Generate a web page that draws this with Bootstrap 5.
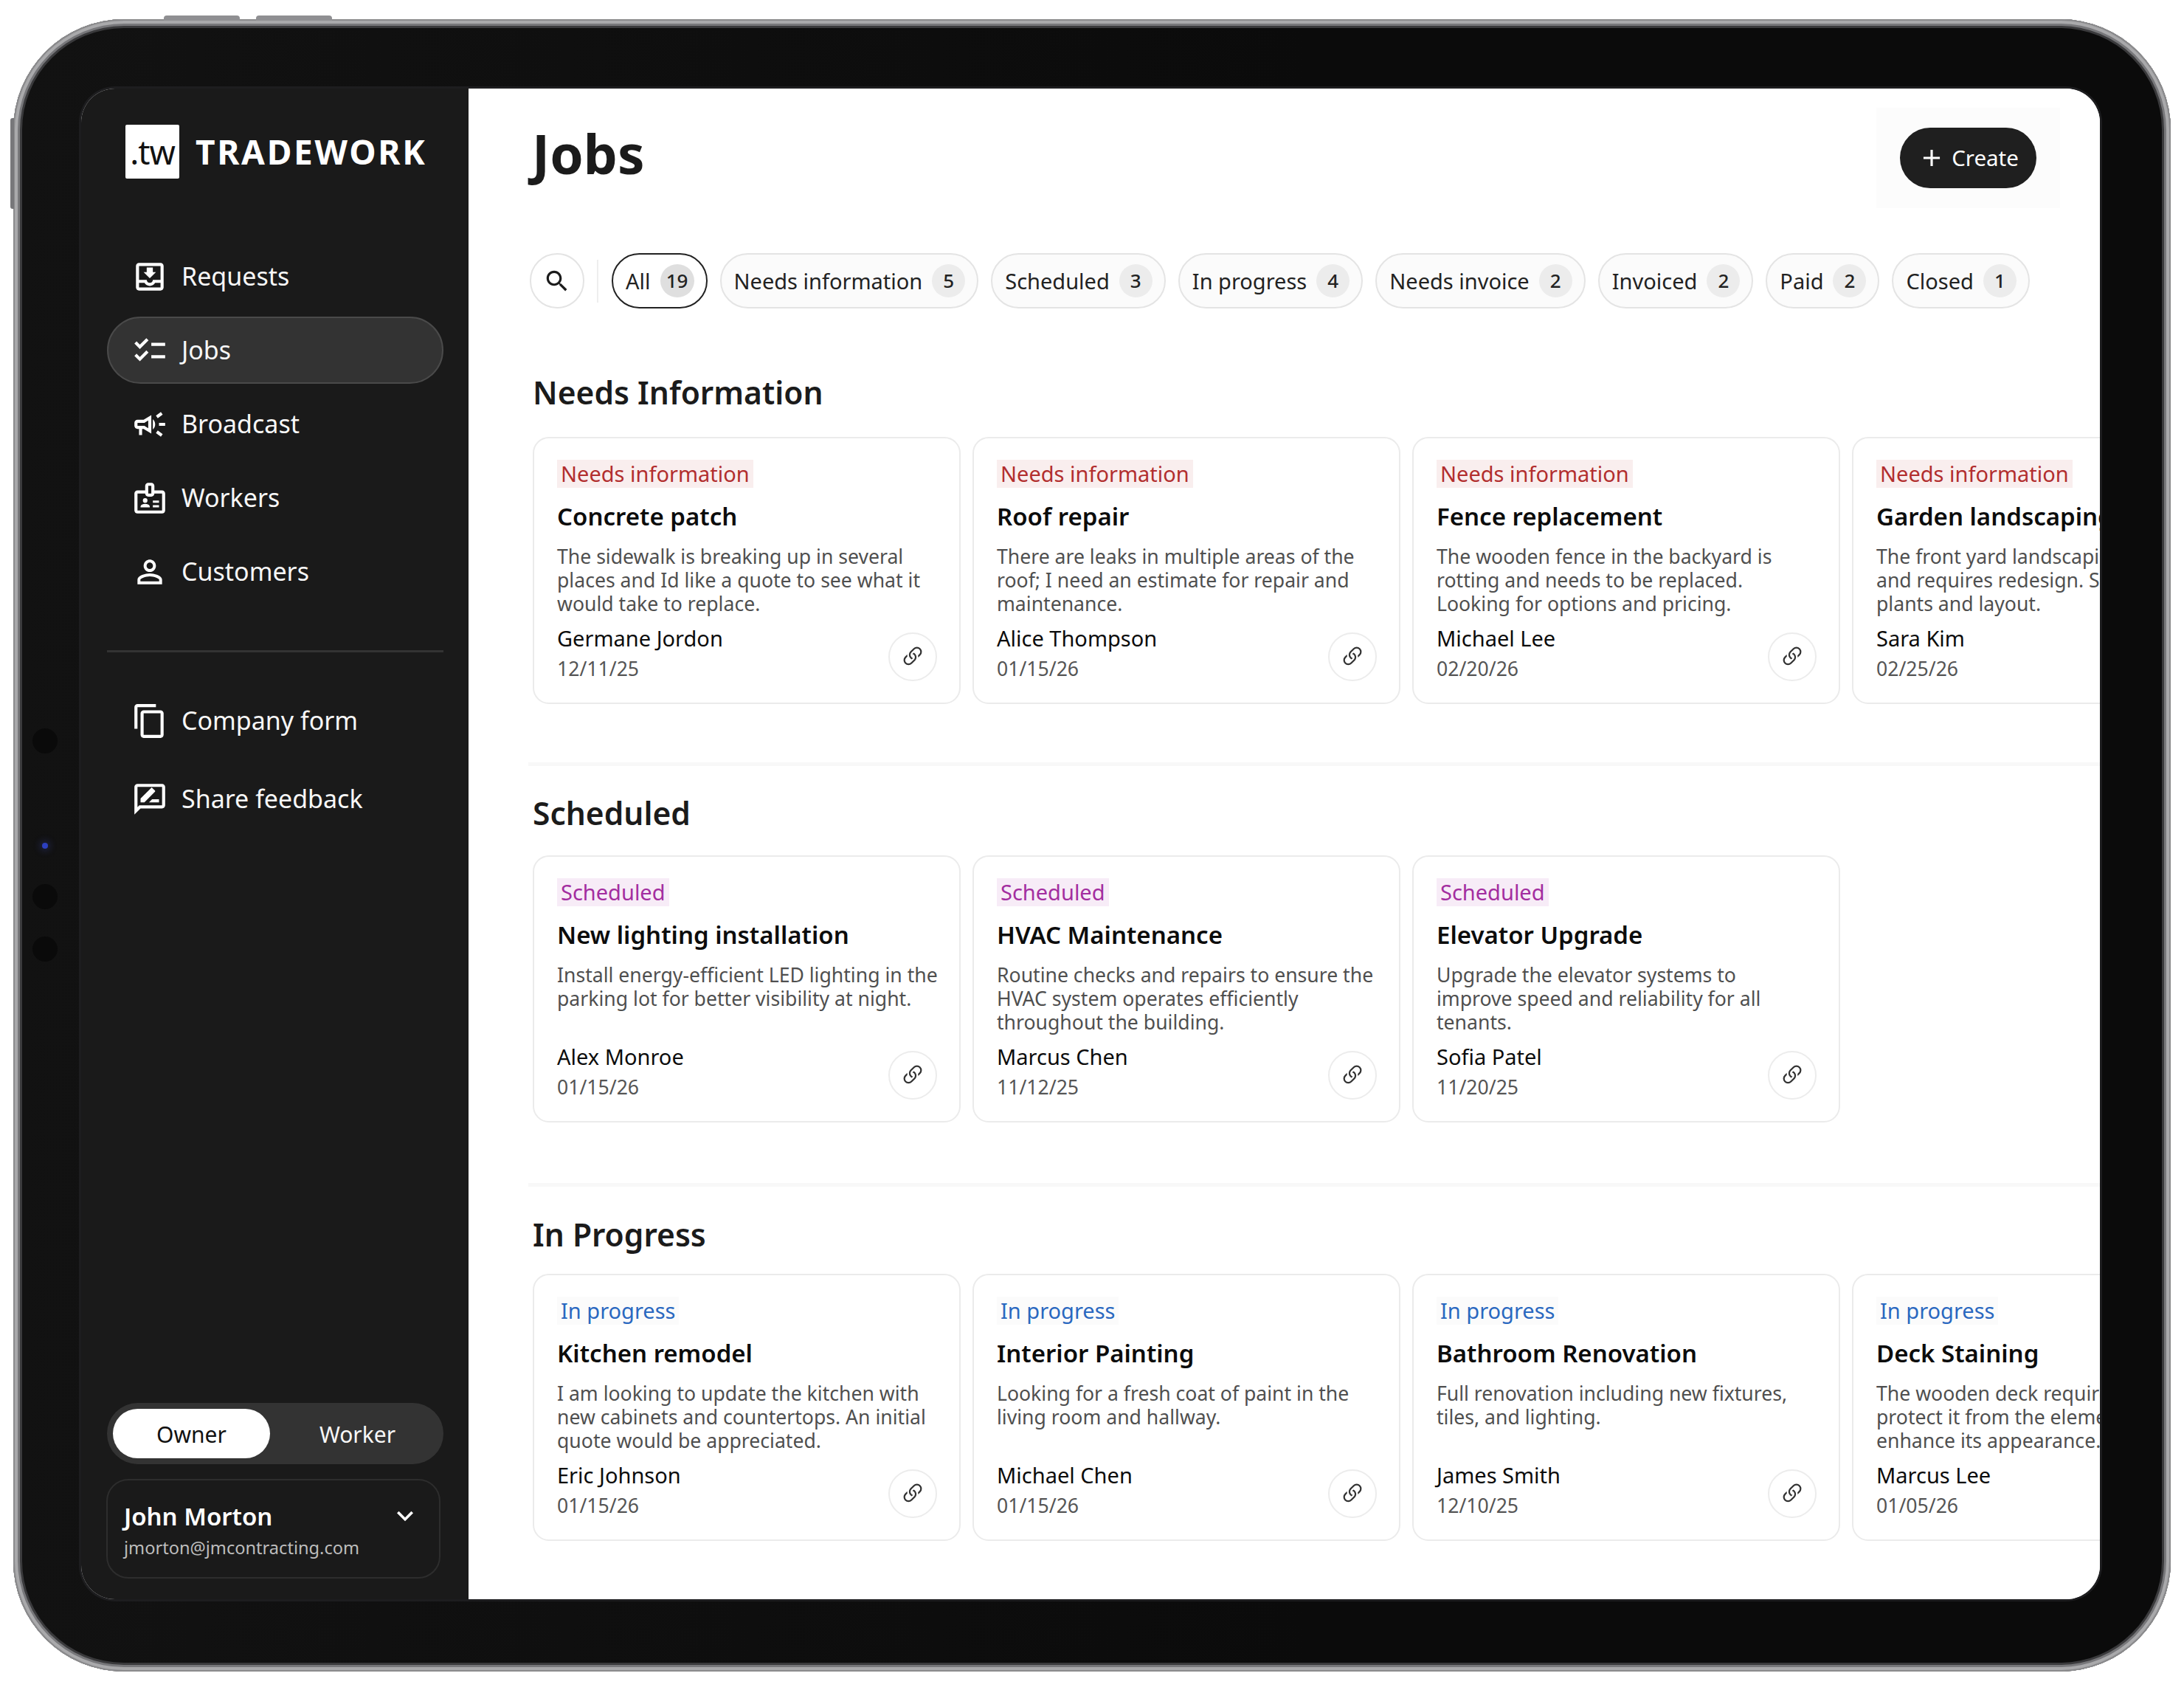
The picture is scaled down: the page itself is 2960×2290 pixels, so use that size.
<!DOCTYPE html>
<html lang="en">
<head>
<meta charset="utf-8">
<title>Tradework Jobs</title>
<link href="https://cdn.jsdelivr.net/npm/bootstrap@5.3.0/dist/css/bootstrap.min.css" rel="stylesheet">
<style>
html,body{margin:0;width:2960px;height:2290px;overflow:hidden;background:#fff;font-family:"Noto Sans",sans-serif;}
.tablet-shell{position:relative;margin:26px 0 0 18px;width:2924px;height:2239px;border-radius:150px;background:linear-gradient(90deg,#121212,#0b0b0b 60%);padding:94px 96px 98px 92px;box-shadow:inset 0 0 0 2px #8a8a8c,inset 0 0 0 6px #a9a9ab,inset 0 0 0 9px #77777a,inset 0 0 0 12px #3a3a3c;}
.hw-btn{position:absolute;background:#8f8f92;}
.hw-top1{left:204px;top:-5px;width:103px;height:7px;border-radius:4px 4px 0 0;}
.hw-top2{left:329px;top:-5px;width:103px;height:7px;border-radius:4px 4px 0 0;}
.hw-left{left:-4px;top:134px;width:5px;height:123px;border-radius:3px 0 0 3px;background:#77777a;}
.lens{position:absolute;left:26px;width:34px;height:34px;border-radius:50%;background:#0a0a0a;}
.lens-a{top:961px}.lens-c{top:1172px}.lens-d{top:1243px}
.lens-led{position:absolute;left:39px;top:1116px;width:8px;height:8px;border-radius:50%;background:#2c3fbf;box-shadow:0 0 8px 4px rgba(60,70,170,.25);}
.tablet-screen{width:2736px;height:2047px;border-radius:46px;overflow:hidden;box-shadow:0 0 0 3px #1d1d1f;background:#fff;}
.side-panel{width:525px;flex:0 0 525px;background:#1a1a1a;color:#f7f7f7;padding:49px 34px 28px 35px;}
.brand-row{margin:0 0 87px 25px;}
.brand-box{width:73px;height:73px;background:#fff;color:#111;font-size:45px;line-height:73px;text-align:center;letter-spacing:-1px;border-radius:2px;}
.brand-name{font-size:46px;font-weight:700;letter-spacing:2.7px;color:#fff;margin-left:22px;line-height:73px;}
.side-link{height:91px;padding:0 0 0 31px;color:#f7f7f7;font-size:34px;border-radius:46px;border:2px solid transparent;text-decoration:none;gap:18px;}
.side-link:hover{color:#fff}
.side-link svg{width:50px;height:50px;fill:#fff;flex:none;}
.side-link.is-current{background:#333;border-color:#4a4a4a;}
.side-gap{margin-top:9px}
.side-rule{height:3px;background:#333;opacity:1;border:0;margin:61px 0 0;}
.side-lower{margin-top:47px}
.side-lower .side-link + .side-link{margin-top:15px}
.role-switch{height:83px;background:#333;border-radius:42px;padding:8px;}
.role-item{font-size:30px;text-align:center;border-radius:36px;line-height:69px;color:#f7f7f7;}
.role-item.is-on{width:213px;flex:none;background:#fff;color:#111;}
.role-item.is-off{padding-left:10px;}
.user-box{margin:20px 0 0 -1px;width:453px;height:135px;border:2px solid #2d2d2d;border-radius:30px;padding:26px 24px 0 22px;}
.user-name{font-size:33px;font-weight:600;line-height:46px;color:#fff;}
.user-mail{font-size:23.6px;line-height:34px;color:#bdbdbd;margin-top:2px;}
.user-box svg{width:44px;height:44px;fill:#fff;}
.main-panel{flex:1;min-width:0;padding:53px 0 0 85px;overflow:hidden;background:#fff;}
.page-title{font-size:73px;font-weight:700;color:#1b1b1b;margin:-12px 0 0 1px;line-height:82px;}
.create-wrap{margin:-27px 54px -27px 0;background:#fcfcfc;padding:27px 32px;}
.create-btn{height:82px;width:185px;padding:0;background:#1f1f1f;color:#fff;border:0;border-radius:41px;font-size:29.5px;gap:8px;}
.create-btn:hover{background:#1f1f1f;color:#fff}
.create-btn svg{width:38px;height:38px;fill:#fff;}
.filter-row{margin:88px 0 0 -2px;height:75px;}
.chip{height:75px;padding:0 16px 0 17px;border:2px solid #e4e4e4;border-radius:38px;background:#fbfbfb;font-size:29px;color:#222;gap:13px;margin-right:17px;white-space:nowrap;}
.chip.is-on{background:#fff;border-color:#222;}
.chip-count{width:45px;height:45px;border-radius:50%;background:#ececec;font-size:26px;font-weight:500;color:#222;padding:0;line-height:45px;}
.chip.is-on .chip-count{background:#dfdfdf;width:46px;}
.search-chip{width:74px;padding:0;justify-content:center;margin-right:17px;background:#fff;}
.search-chip svg{width:38px;height:38px;fill:#1b1b1b;}
.filter-rule{width:2px;height:58px;background:#eee;margin-right:18px;}
.group-title{font-size:42.5px;font-weight:600;color:#1b1b1b;line-height:60px;margin:0 0 30px 2px;}
.first-group{margin-top:84px}
.group-rule{height:5px;background:#f8f8f8;border:0;opacity:1;margin:79px 0 34px -4px;}
.group-rule.rule-late{margin:82px 0 35px -4px;}
.title-tight{margin-bottom:27px;}
.title-tighter{margin-bottom:23px;}
.job-row{gap:16px;margin-left:2px;}
.job-card{flex:0 0 580px;width:580px;height:362px;border:2px solid #ebebeb;border-radius:22px;padding:29px 26px 28px 31px;background:#fff;position:relative;}
.job-tag{align-self:flex-start;font-size:29px;line-height:38px;padding:0 5px;}
.tag-red{color:#b22e2e;background:#f9eeee;}
.tag-purple{color:#a32ea0;background:#f7ecf7;}
.tag-blue{color:#2a68c0;background:#fbfbfb;}
.job-title{font-size:33px;font-weight:600;color:#0c0c0c;line-height:44px;margin:17px 0 0;white-space:nowrap;}
.job-desc{font-size:26.6px;line-height:32px;color:#4f4f4f;margin:16px 0 0;}
.job-foot{margin-top:auto;position:relative;}
.job-name{font-size:29px;line-height:38px;color:#0c0c0c;}
.job-date{font-size:26.6px;line-height:36px;color:#555;margin-top:4px;}
.link-btn{position:absolute;right:4px;top:11px;width:66px;height:66px;border:2px solid #ececec;border-radius:50%;padding:0;background:#fff;}
.link-btn svg{width:36px;height:36px;fill:#333;}
</style>
</head>
<body>
<div class="tablet-shell">
  <span class="hw-btn hw-top1"></span><span class="hw-btn hw-top2"></span><span class="hw-btn hw-left"></span>
  <span class="lens lens-a"></span><span class="lens-led"></span><span class="lens lens-c"></span><span class="lens lens-d"></span>
  <div class="tablet-screen d-flex">
    <aside class="side-panel d-flex flex-column">
      <div class="brand-row d-flex align-items-center">
        <span class="brand-box">.tw</span><span class="brand-name">TRADEWORK</span>
      </div>
      <nav class="d-flex flex-column">
        <a class="side-link d-flex align-items-center" href="#"><svg viewBox="0 0 24 24"><path d="M19 3H4.99C3.89 3 3 3.9 3 5l.01 14c0 1.1.89 2 1.99 2h14c1.1 0 2-.9 2-2V5c0-1.1-.9-2-2-2zm0 16H5v-3h3.56c.69 1.19 1.97 2 3.45 2s2.75-.81 3.45-2H19v3zm0-5h-4.99c0 1.1-.9 2-2 2s-2-.9-2-2H5V5h14v9zm-3-5h-2V6h-4v3H8l4 4 4-4z"/></svg>Requests</a>
        <a class="side-link is-current d-flex align-items-center side-gap" href="#"><svg viewBox="0 0 24 24"><path d="M22 7h-9v2h9V7zm0 8h-9v2h9v-2zM5.54 11 2 7.46l1.41-1.41 2.12 2.12 4.24-4.24 1.41 1.41L5.54 11zm0 8L2 15.46l1.41-1.41 2.12 2.12 4.24-4.24 1.41 1.41L5.54 19z"/></svg>Jobs</a>
        <a class="side-link d-flex align-items-center side-gap" href="#"><svg viewBox="0 0 24 24"><path d="M18 11v2h4v-2h-4zm-2 6.61c.96.71 2.21 1.65 3.2 2.39.4-.53.8-1.07 1.2-1.6-.99-.74-2.24-1.68-3.2-2.4-.4.54-.8 1.08-1.2 1.61zM20.4 5.6c-.4-.53-.8-1.07-1.2-1.6-.99.74-2.24 1.68-3.2 2.4.4.53.8 1.07 1.2 1.6.96-.72 2.21-1.65 3.2-2.4zM4 9c-1.1 0-2 .9-2 2v2c0 1.1.9 2 2 2h1v4h2v-4h1l5 3V6L8 9H4zm5.03 1.71L11 9.53v4.94l-1.97-1.18-.48-.29H4v-2h4.55l.48-.29zM15.5 12c0-1.33-.58-2.53-1.5-3.35v6.69c.92-.81 1.5-2.01 1.5-3.34z"/></svg>Broadcast</a>
        <a class="side-link d-flex align-items-center side-gap" href="#"><svg viewBox="0 0 24 24"><path d="M20 7h-5V4c0-1.1-.9-2-2-2h-2C9.9 2 9 2.9 9 4v3H4c-1.1 0-2 .9-2 2v11c0 1.1.9 2 2 2h16c1.1 0 2-.9 2-2V9c0-1.1-.9-2-2-2zM11 7V4h2v5h-2V7zm9 13H4V9h5c0 1.1.9 2 2 2h2c1.1 0 2-.9 2-2h5v11zM9 15a1.5 1.5 0 1 0 0-3 1.5 1.5 0 0 0 0 3zm2.08 1.18c-.64-.28-1.34-.43-2.08-.43s-1.44.15-2.08.43C6.36 16.42 6 16.96 6 17.57V18h6v-.43c0-.61-.36-1.15-.92-1.39zM18 13.5h-4V15h4v-1.5zm0 3h-4V18h4v-1.5z"/></svg>Workers</a>
        <a class="side-link d-flex align-items-center side-gap" href="#"><svg viewBox="0 0 24 24"><path d="M12 5.9c1.16 0 2.1.94 2.1 2.1s-.94 2.1-2.1 2.1S9.9 9.16 9.9 8s.94-2.1 2.1-2.1m0 9c2.97 0 6.1 1.46 6.1 2.1v1.1H5.9V17c0-.64 3.13-2.1 6.1-2.1M12 4C9.79 4 8 5.79 8 8s1.79 4 4 4 4-1.79 4-4-1.79-4-4-4zm0 9c-2.67 0-8 1.34-8 4v3h16v-3c0-2.66-5.33-4-8-4z"/></svg>Customers</a>
      </nav>
      <hr class="side-rule">
      <nav class="side-lower d-flex flex-column">
        <a class="side-link d-flex align-items-center" href="#"><svg viewBox="0 0 24 24"><path d="M16 1H4c-1.1 0-2 .9-2 2v14h2V3h12V1zm3 4H8c-1.1 0-2 .9-2 2v14c0 1.1.9 2 2 2h11c1.1 0 2-.9 2-2V7c0-1.1-.9-2-2-2zm0 16H8V7h11v14z"/></svg>Company form</a>
        <a class="side-link d-flex align-items-center" href="#"><svg viewBox="0 0 24 24"><path d="M20 2H4c-1.1 0-2 .9-2 2v18l4-4h14c1.1 0 2-.9 2-2V4c0-1.1-.9-2-2-2zm0 14H5.17L4 17.17V4h16v12zM6 14h2.5l6.88-6.88c.2-.2.2-.51 0-.71L13.6 4.62c-.2-.2-.51-.2-.71 0L6 11.5V14zm5.5 0H18v-2h-4.5l-2 2z"/></svg>Share feedback</a>
      </nav>
      <div class="mt-auto role-switch d-flex">
        <div class="role-item is-on">Owner</div>
        <div class="role-item is-off flex-grow-1">Worker</div>
      </div>
      <div class="user-box d-flex justify-content-between">
        <div>
          <div class="user-name">John Morton</div>
          <div class="user-mail">jmorton@jmcontracting.com</div>
        </div>
        <svg viewBox="0 0 24 24"><path d="M16.59 8.59 12 13.17 7.41 8.59 6 10l6 6 6-6z"/></svg>
      </div>
    </aside>
    <main class="main-panel">
      <div class="d-flex justify-content-between align-items-center">
        <h1 class="page-title">Jobs</h1>
        <div class="create-wrap"><button type="button" class="btn create-btn d-flex align-items-center justify-content-center"><svg viewBox="0 0 24 24"><path d="M19 13h-6v6h-2v-6H5v-2h6V5h2v6h6v2z"/></svg>Create</button></div>
      </div>
      <div class="filter-row d-flex align-items-center">
        <div class="chip search-chip d-flex align-items-center"><svg viewBox="0 0 24 24"><path d="M15.5 14h-.79l-.28-.27C15.41 12.59 16 11.11 16 9.5 16 5.91 13.09 3 9.5 3S3 5.91 3 9.5 5.91 16 9.5 16c1.61 0 3.09-.59 4.23-1.57l.27.28v.79l5 4.99L20.49 19l-4.99-5zm-6 0C7.01 14 5 11.99 5 9.5S7.01 5 9.5 5 14 7.01 14 9.5 11.99 14 9.5 14z"/></svg></div>
        <span class="filter-rule"></span>
        <div class="chip is-on d-flex align-items-center">All<span class="badge chip-count">19</span></div>
        <div class="chip d-flex align-items-center">Needs information<span class="badge chip-count">5</span></div>
        <div class="chip d-flex align-items-center">Scheduled<span class="badge chip-count">3</span></div>
        <div class="chip d-flex align-items-center">In progress<span class="badge chip-count">4</span></div>
        <div class="chip d-flex align-items-center">Needs invoice<span class="badge chip-count">2</span></div>
        <div class="chip d-flex align-items-center">Invoiced<span class="badge chip-count">2</span></div>
        <div class="chip d-flex align-items-center">Paid<span class="badge chip-count">2</span></div>
        <div class="chip d-flex align-items-center">Closed<span class="badge chip-count">1</span></div>
      </div>

      <section class="first-group">
        <h2 class="group-title">Needs Information</h2>
        <div class="job-row d-flex">
          <article class="card job-card d-flex flex-column"><span class="job-tag tag-red">Needs information</span><h3 class="job-title">Concrete patch</h3><p class="job-desc">The sidewalk is breaking up in several places and Id like a quote to see what it would take to replace.</p><div class="job-foot"><div class="job-name">Germane Jordon</div><div class="job-date">12/11/25</div><button type="button" class="btn link-btn d-flex align-items-center justify-content-center" aria-label="Copy link"><svg viewBox="0 0 16 16"><path d="M4.715 6.542 3.343 7.914a3 3 0 1 0 4.243 4.243l1.828-1.829A3 3 0 0 0 8.586 5.5L8 6.086a1.002 1.002 0 0 0-.154.199 2 2 0 0 1 .861 3.337L6.88 11.45a2 2 0 1 1-2.83-2.83l.793-.792a4.018 4.018 0 0 1-.128-1.287z"/><path d="M6.586 4.672A3 3 0 0 0 7.414 9.5l.775-.776a2 2 0 0 1-.896-3.346L9.12 3.55a2 2 0 1 1 2.83 2.83l-.793.792c.112.42.155.855.128 1.287l1.372-1.372a3 3 0 1 0-4.243-4.243L6.586 4.672z"/></svg></button></div></article>
          <article class="card job-card d-flex flex-column"><span class="job-tag tag-red">Needs information</span><h3 class="job-title">Roof repair</h3><p class="job-desc">There are leaks in multiple areas of the roof; I need an estimate for repair and maintenance.</p><div class="job-foot"><div class="job-name">Alice Thompson</div><div class="job-date">01/15/26</div><button type="button" class="btn link-btn d-flex align-items-center justify-content-center" aria-label="Copy link"><svg viewBox="0 0 16 16"><path d="M4.715 6.542 3.343 7.914a3 3 0 1 0 4.243 4.243l1.828-1.829A3 3 0 0 0 8.586 5.5L8 6.086a1.002 1.002 0 0 0-.154.199 2 2 0 0 1 .861 3.337L6.88 11.45a2 2 0 1 1-2.83-2.83l.793-.792a4.018 4.018 0 0 1-.128-1.287z"/><path d="M6.586 4.672A3 3 0 0 0 7.414 9.5l.775-.776a2 2 0 0 1-.896-3.346L9.12 3.55a2 2 0 1 1 2.83 2.83l-.793.792c.112.42.155.855.128 1.287l1.372-1.372a3 3 0 1 0-4.243-4.243L6.586 4.672z"/></svg></button></div></article>
          <article class="card job-card d-flex flex-column"><span class="job-tag tag-red">Needs information</span><h3 class="job-title">Fence replacement</h3><p class="job-desc">The wooden fence in the backyard is rotting and needs to be replaced. Looking for options and pricing.</p><div class="job-foot"><div class="job-name">Michael Lee</div><div class="job-date">02/20/26</div><button type="button" class="btn link-btn d-flex align-items-center justify-content-center" aria-label="Copy link"><svg viewBox="0 0 16 16"><path d="M4.715 6.542 3.343 7.914a3 3 0 1 0 4.243 4.243l1.828-1.829A3 3 0 0 0 8.586 5.5L8 6.086a1.002 1.002 0 0 0-.154.199 2 2 0 0 1 .861 3.337L6.88 11.45a2 2 0 1 1-2.83-2.83l.793-.792a4.018 4.018 0 0 1-.128-1.287z"/><path d="M6.586 4.672A3 3 0 0 0 7.414 9.5l.775-.776a2 2 0 0 1-.896-3.346L9.12 3.55a2 2 0 1 1 2.83 2.83l-.793.792c.112.42.155.855.128 1.287l1.372-1.372a3 3 0 1 0-4.243-4.243L6.586 4.672z"/></svg></button></div></article>
          <article class="card job-card d-flex flex-column"><span class="job-tag tag-red">Needs information</span><h3 class="job-title">Garden landscaping</h3><p class="job-desc">The front yard landscaping is overgrown and requires redesign. Seeking ideas for plants and layout.</p><div class="job-foot"><div class="job-name">Sara Kim</div><div class="job-date">02/25/26</div></div></article>
        </div>
      </section>
      <hr class="group-rule">
      <section>
        <h2 class="group-title title-tight">Scheduled</h2>
        <div class="job-row d-flex">
          <article class="card job-card d-flex flex-column"><span class="job-tag tag-purple">Scheduled</span><h3 class="job-title">New lighting installation</h3><p class="job-desc">Install energy-efficient LED lighting in the parking lot for better visibility at night.</p><div class="job-foot"><div class="job-name">Alex Monroe</div><div class="job-date">01/15/26</div><button type="button" class="btn link-btn d-flex align-items-center justify-content-center" aria-label="Copy link"><svg viewBox="0 0 16 16"><path d="M4.715 6.542 3.343 7.914a3 3 0 1 0 4.243 4.243l1.828-1.829A3 3 0 0 0 8.586 5.5L8 6.086a1.002 1.002 0 0 0-.154.199 2 2 0 0 1 .861 3.337L6.88 11.45a2 2 0 1 1-2.83-2.83l.793-.792a4.018 4.018 0 0 1-.128-1.287z"/><path d="M6.586 4.672A3 3 0 0 0 7.414 9.5l.775-.776a2 2 0 0 1-.896-3.346L9.12 3.55a2 2 0 1 1 2.83 2.83l-.793.792c.112.42.155.855.128 1.287l1.372-1.372a3 3 0 1 0-4.243-4.243L6.586 4.672z"/></svg></button></div></article>
          <article class="card job-card d-flex flex-column"><span class="job-tag tag-purple">Scheduled</span><h3 class="job-title">HVAC Maintenance</h3><p class="job-desc">Routine checks and repairs to ensure the HVAC system operates efficiently throughout the building.</p><div class="job-foot"><div class="job-name">Marcus Chen</div><div class="job-date">11/12/25</div><button type="button" class="btn link-btn d-flex align-items-center justify-content-center" aria-label="Copy link"><svg viewBox="0 0 16 16"><path d="M4.715 6.542 3.343 7.914a3 3 0 1 0 4.243 4.243l1.828-1.829A3 3 0 0 0 8.586 5.5L8 6.086a1.002 1.002 0 0 0-.154.199 2 2 0 0 1 .861 3.337L6.88 11.45a2 2 0 1 1-2.83-2.83l.793-.792a4.018 4.018 0 0 1-.128-1.287z"/><path d="M6.586 4.672A3 3 0 0 0 7.414 9.5l.775-.776a2 2 0 0 1-.896-3.346L9.12 3.55a2 2 0 1 1 2.83 2.83l-.793.792c.112.42.155.855.128 1.287l1.372-1.372a3 3 0 1 0-4.243-4.243L6.586 4.672z"/></svg></button></div></article>
          <article class="card job-card d-flex flex-column"><span class="job-tag tag-purple">Scheduled</span><h3 class="job-title">Elevator Upgrade</h3><p class="job-desc">Upgrade the elevator systems to<br>improve speed and reliability for all tenants.</p><div class="job-foot"><div class="job-name">Sofia Patel</div><div class="job-date">11/20/25</div><button type="button" class="btn link-btn d-flex align-items-center justify-content-center" aria-label="Copy link"><svg viewBox="0 0 16 16"><path d="M4.715 6.542 3.343 7.914a3 3 0 1 0 4.243 4.243l1.828-1.829A3 3 0 0 0 8.586 5.5L8 6.086a1.002 1.002 0 0 0-.154.199 2 2 0 0 1 .861 3.337L6.88 11.45a2 2 0 1 1-2.83-2.83l.793-.792a4.018 4.018 0 0 1-.128-1.287z"/><path d="M6.586 4.672A3 3 0 0 0 7.414 9.5l.775-.776a2 2 0 0 1-.896-3.346L9.12 3.55a2 2 0 1 1 2.83 2.83l-.793.792c.112.42.155.855.128 1.287l1.372-1.372a3 3 0 1 0-4.243-4.243L6.586 4.672z"/></svg></button></div></article>
        </div>
      </section>
      <hr class="group-rule rule-late">
      <section>
        <h2 class="group-title title-tighter">In Progress</h2>
        <div class="job-row d-flex">
          <article class="card job-card d-flex flex-column"><span class="job-tag tag-blue">In progress</span><h3 class="job-title">Kitchen remodel</h3><p class="job-desc">I am looking to update the kitchen with new cabinets and countertops. An initial quote would be appreciated.</p><div class="job-foot"><div class="job-name">Eric Johnson</div><div class="job-date">01/15/26</div><button type="button" class="btn link-btn d-flex align-items-center justify-content-center" aria-label="Copy link"><svg viewBox="0 0 16 16"><path d="M4.715 6.542 3.343 7.914a3 3 0 1 0 4.243 4.243l1.828-1.829A3 3 0 0 0 8.586 5.5L8 6.086a1.002 1.002 0 0 0-.154.199 2 2 0 0 1 .861 3.337L6.88 11.45a2 2 0 1 1-2.83-2.83l.793-.792a4.018 4.018 0 0 1-.128-1.287z"/><path d="M6.586 4.672A3 3 0 0 0 7.414 9.5l.775-.776a2 2 0 0 1-.896-3.346L9.12 3.55a2 2 0 1 1 2.83 2.83l-.793.792c.112.42.155.855.128 1.287l1.372-1.372a3 3 0 1 0-4.243-4.243L6.586 4.672z"/></svg></button></div></article>
          <article class="card job-card d-flex flex-column"><span class="job-tag tag-blue">In progress</span><h3 class="job-title">Interior Painting</h3><p class="job-desc">Looking for a fresh coat of paint in the living room and hallway.</p><div class="job-foot"><div class="job-name">Michael Chen</div><div class="job-date">01/15/26</div><button type="button" class="btn link-btn d-flex align-items-center justify-content-center" aria-label="Copy link"><svg viewBox="0 0 16 16"><path d="M4.715 6.542 3.343 7.914a3 3 0 1 0 4.243 4.243l1.828-1.829A3 3 0 0 0 8.586 5.5L8 6.086a1.002 1.002 0 0 0-.154.199 2 2 0 0 1 .861 3.337L6.88 11.45a2 2 0 1 1-2.83-2.83l.793-.792a4.018 4.018 0 0 1-.128-1.287z"/><path d="M6.586 4.672A3 3 0 0 0 7.414 9.5l.775-.776a2 2 0 0 1-.896-3.346L9.12 3.55a2 2 0 1 1 2.83 2.83l-.793.792c.112.42.155.855.128 1.287l1.372-1.372a3 3 0 1 0-4.243-4.243L6.586 4.672z"/></svg></button></div></article>
          <article class="card job-card d-flex flex-column"><span class="job-tag tag-blue">In progress</span><h3 class="job-title">Bathroom Renovation</h3><p class="job-desc">Full renovation including new fixtures, tiles, and lighting.</p><div class="job-foot"><div class="job-name">James Smith</div><div class="job-date">12/10/25</div><button type="button" class="btn link-btn d-flex align-items-center justify-content-center" aria-label="Copy link"><svg viewBox="0 0 16 16"><path d="M4.715 6.542 3.343 7.914a3 3 0 1 0 4.243 4.243l1.828-1.829A3 3 0 0 0 8.586 5.5L8 6.086a1.002 1.002 0 0 0-.154.199 2 2 0 0 1 .861 3.337L6.88 11.45a2 2 0 1 1-2.83-2.83l.793-.792a4.018 4.018 0 0 1-.128-1.287z"/><path d="M6.586 4.672A3 3 0 0 0 7.414 9.5l.775-.776a2 2 0 0 1-.896-3.346L9.12 3.55a2 2 0 1 1 2.83 2.83l-.793.792c.112.42.155.855.128 1.287l1.372-1.372a3 3 0 1 0-4.243-4.243L6.586 4.672z"/></svg></button></div></article>
          <article class="card job-card d-flex flex-column"><span class="job-tag tag-blue">In progress</span><h3 class="job-title">Deck Staining</h3><p class="job-desc">The wooden deck requires staining to protect it from the elements and enhance its appearance.</p><div class="job-foot"><div class="job-name">Marcus Lee</div><div class="job-date">01/05/26</div></div></article>
        </div>
      </section>
    </main>
  </div>
</div>
<script src="https://cdn.jsdelivr.net/npm/bootstrap@5.3.0/dist/js/bootstrap.bundle.min.js"></script>
</body>
</html>
